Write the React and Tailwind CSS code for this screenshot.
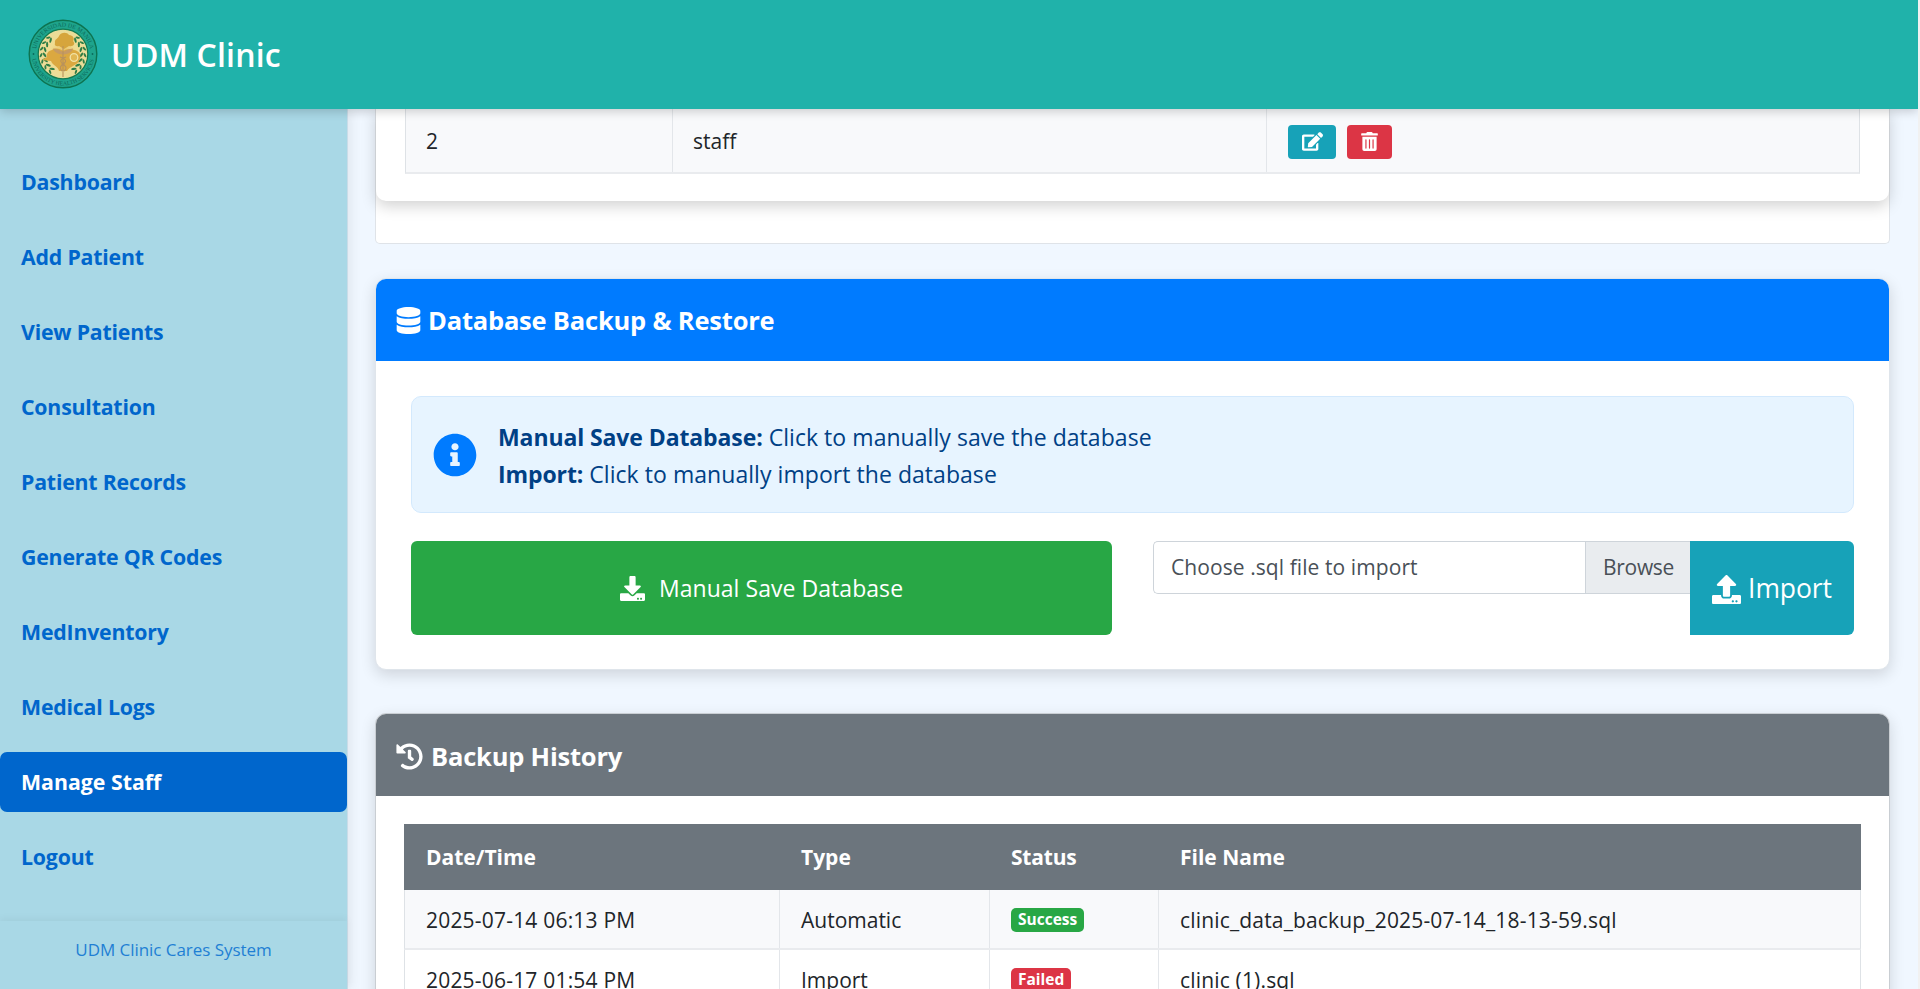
import { FaDatabase, FaEdit, FaTrashAlt, FaInfoCircle, FaDownload, FaHistory } from "react-icons/fa";

const NAV = [
  "Dashboard",
  "Add Patient",
  "View Patients",
  "Consultation",
  "Patient Records",
  "Generate QR Codes",
  "MedInventory",
  "Medical Logs",
  "Manage Staff",
  "Logout",
];

const HISTORY = [
  { date: "2025-07-14 06:13 PM", type: "Automatic", ok: true, file: "clinic_data_backup_2025-07-14_18-13-59.sql" },
  { date: "2025-06-17 01:54 PM", type: "Import", ok: false, file: "clinic (1).sql" },
];

const LEAVES = [0, 1, 2, 3, 4, 5, 6];

function Seal() {
  return (
    <svg viewBox="0 0 70 70" className="mb-[2px] size-[70px] shrink-0">
      <defs>
        <radialGradient id="gold">
          <stop offset="0" stopColor="#e6bb62" />
          <stop offset="0.55" stopColor="#f0dc92" />
          <stop offset="1" stopColor="#e9dc9a" />
        </radialGradient>
        <path id="arcTop" d="M7.6 35a27.4 27.4 0 0 1 54.800 0" />
        <path id="arcBottom" d="M3.600 35a31.400 31.400 0 0 0 62.800 0" />
      </defs>
      <circle cx="35" cy="35" r="33.8" fill="#1ea48c" stroke="#0d7350" strokeWidth="1.400" />
      <circle cx="35" cy="35" r="24.800" fill="url(#gold)" stroke="#137a50" strokeWidth="1.200" />
      <g fill="#0c6a5b" fontFamily="Liberation Serif, serif" fontSize="6">
        <text textLength="76" lengthAdjust="spacingAndGlyphs"><textPath href="#arcTop" startOffset="5">UNIVERSIDAD DE MANILA</textPath></text>
        <text textLength="88" lengthAdjust="spacingAndGlyphs"><textPath href="#arcBottom" startOffset="5">UNIVERSITY HEALTH SERVICES</textPath></text>
      </g>
      <circle cx="5.500" cy="35" r="0.9" fill="#0c6a5b" />
      <circle cx="64.500" cy="35" r="0.9" fill="#0c6a5b" />
      <g fill="#2f7d46">
        {LEAVES.map((i) => {
          const right = -48 + i * 17;
          return (
            <g key={i}>
              <ellipse cx="53.500" cy="35" rx="1.1" ry="2.700" transform={`rotate(${right} 35 35) rotate(32 53.5 35)`} />
              <ellipse cx="57" cy="35" rx="1" ry="2.300" transform={`rotate(${right} 35 35) rotate(-32 57 35)`} />
              <ellipse cx="16.500" cy="35" rx="1.1" ry="2.700" transform={`rotate(${-right} 35 35) rotate(-32 16.5 35)`} />
              <ellipse cx="13" cy="35" rx="1" ry="2.300" transform={`rotate(${-right} 35 35) rotate(32 13 35)`} />
            </g>
          );
        })}
      </g>
      <path d="M27 24c-1-4 3-4 4-7 2-4 8-4 10-1 4 0 6 4 4 6 3 3 0 6-4 5l-5 3-5-3c-3 1-5-1-4-3z" fill="#d6a53c" />
      <path d="M24 31c4-3 8-1 11 1 3-2 8-3 11-1 6 1 8 6 5 11-3 5-9 5-12 10h-8c-1-5-6-5-8-10l-9-1 5-3c-1-3 1-6 5-7z" fill="#dba840" />
      <circle cx="46" cy="38.500" r="3.800" fill="#e2b753" stroke="#f1e2a4" strokeWidth="1.300" />
      <path d="M25 29.500c4 .5 7 1.500 10 3.500 3-2 6-3 10-3.500-1 4-5 5.500-10 6-5-.5-9-2-10-6z" fill="#c69a63" />
      <path d="M35 27v31M32 38c6 2 8 5 2 7 5 2 5 5 2 7M38 38c-6 2-7 5-2 7-5 2-4 5-2 7" fill="none" stroke="#b8925c" strokeWidth="1.100" />
    </svg>
  );
}

function UploadIcon() {
  return (
    <svg viewBox="0 0 512 512" fill="currentColor" className="size-[29px] shrink-0">
      <path d="M296 384h-80c-13.300 0-24-10.700-24-24V192h-87.700c-17.800 0-26.700-21.500-14.100-34.100L242.300 5.700c7.500-7.500 19.800-7.500 27.300 0l152.200 152.200c12.600 12.600 3.700 34.100-14.100 34.100H320v168c0 13.300-10.700 24-24 24zm216-8v112c0 13.300-10.700 24-24 24H24c-13.300 0-24-10.700-24-24V376c0-13.300 10.700-24 24-24h136v8c0 30.900 25.100 56 56 56h80c30.900 0 56-25.100 56-56v-8h136c13.300 0 24 10.700 24 24zm-124 88c0-11-9-20-20-20s-20 9-20 20 9 20 20 20 20-9 20-20zm64 0c0-11-9-20-20-20s-20 9-20 20 9 20 20 20 20-9 20-20z" />
    </svg>
  );
}

export default function App() {
  return (
    <div className="flex h-[989px] w-full overflow-hidden bg-[#f1f1f1] font-['Open_Sans','Noto_Sans',sans-serif] text-[#212529]">
      <div className="flex w-[1918px] flex-col overflow-hidden bg-[#f0f7ff]">
        <header className="z-20 flex h-[109px] shrink-0 items-center bg-[#20b2aa] pl-[28px] shadow-[0_2px_10px_rgba(0,0,0,0.2)]">
          <Seal />
          <h1 className="ml-[13px] text-[32px] font-semibold tracking-[0.15px] text-white">UDM Clinic</h1>
        </header>

        <div className="flex min-h-0 flex-1">
          <aside className="z-10 flex w-[348px] shrink-0 flex-col border-r border-[#c9dce8] bg-[#a9d8e6] shadow-[2px_0_12px_rgba(0,0,0,0.08)]">
            <nav className="flex flex-1 flex-col gap-[15px] pt-[43px]">
              {NAV.map((item) => (
                <a
                  key={item}
                  className={
                    item === "Manage Staff"
                      ? "flex h-[60px] items-center rounded-[7px] bg-[#0066cc] pl-[21px] text-[21.300px] font-bold text-white"
                      : "flex h-[60px] items-center pl-[21px] text-[21.300px] font-bold tracking-[-0.2px] text-[#0066cc]"
                  }
                >
                  {item}
                </a>
              ))}
            </nav>
            <footer className="flex h-[68px] items-center justify-center pb-[10px] text-[17px] tracking-[-0.05px] text-[#1f7fd4] shadow-[0_-2px_8px_rgba(0,0,0,0.05)]">
              UDM Clinic Cares System
            </footer>
          </aside>

          <main className="flex min-w-0 flex-1 flex-col overflow-hidden pl-[27px] pr-[28px]">
            <section className="h-[135px] shrink-0 rounded-b-[5px] border border-t-0 border-[#dfe3e8] bg-white">
              <div className="h-[92px] rounded-b-[10px] bg-white px-[29px] shadow-[0_5px_15px_rgba(0,0,0,0.18)]">
                <div className="flex h-[65px] border-x border-b-2 border-x-[#dee2e6] border-b-[#e9ebee] bg-[#f8f9fb] pr-0 text-[21px]">
                  <div className="flex w-[267px] items-center border-r border-[#e3e6ea] pl-[20px] pt-[2px]">2</div>
                  <div className="flex w-[594px] items-center border-r border-[#e3e6ea] pl-[20px] pt-[2px]">staff</div>
                  <div className="flex items-center gap-[11px] pl-[21px] pt-[2px] text-white">
                    <span className="flex h-[34px] w-[48px] items-center justify-center rounded-[4px] bg-[#17a2b8]">
                      <FaEdit className="size-[21px]" />
                    </span>
                    <span className="flex h-[34px] w-[45px] items-center justify-center rounded-[4px] bg-[#dc3545]">
                      <FaTrashAlt className="size-[19px]" />
                    </span>
                  </div>
                </div>
              </div>
            </section>

            <section className="mt-[34px] h-[392px] shrink-0 overflow-hidden rounded-[11px] border border-[#dfe5eb] bg-white shadow-[0_5px_15px_rgba(0,0,0,0.14)]">
              <h2 className="flex h-[82px] items-center gap-[7px] bg-[#007bff] pl-[20px] pt-[1px] text-[25.500px] font-bold tracking-[-0.2px] text-white">
                <FaDatabase className="h-[27px] w-[25px]" />
                Database Backup &amp; Restore
              </h2>
              <div className="px-[35px] pt-[35px]">
                <div className="flex h-[117px] items-center gap-[21px] rounded-[10px] border border-[#d3e9fd] bg-[#e7f4ff] pl-[21px] text-[#004085]">
                  <FaInfoCircle className="size-[44px] text-[#007bff]" />
                  <div className="pt-[3px] text-[23px] leading-[37.500px] tracking-[0.050px]">
                    <p><strong className="tracking-[-0.1px]">Manual Save Database:</strong> Click to manually save the database</p>
                    <p><strong className="tracking-[-0.1px]">Import:</strong> Click to manually import the database</p>
                  </div>
                </div>
                <div className="mt-[28px] flex h-[94px]">
                  <button className="flex w-[701px] items-center justify-center gap-[14px] rounded-[6px] bg-[#28a745] pt-[1px] text-[23px] tracking-[0.050px] text-white">
                    <FaDownload className="size-[25px]" />
                    <span>Manual Save Database</span>
                  </button>
                  <div className="ml-[41px] flex flex-1 text-[21px] text-[#495057]">
                    <div className="flex h-[53px] flex-1 rounded-l-[5px] border border-r-0 border-[#ced4da]">
                      <span className="flex flex-1 items-center pl-[17px] tracking-[0.080px]">Choose .sql file to import</span>
                      <span className="flex w-[105px] items-center border-l border-[#ced4da] bg-[#e9ecef] pl-[17px] tracking-[-0.3px]">Browse</span>
                    </div>
                    <button className="flex w-[164px] items-center justify-center gap-[7px] rounded-r-[6px] bg-[#17a2b8] pt-[2px] text-[26.500px] tracking-[-0.1px] text-white">
                      <UploadIcon />
                      Import
                    </button>
                  </div>
                </div>
              </div>
            </section>

            <section className="mt-[43px] h-[400px] shrink-0 overflow-hidden rounded-[11px] border border-[#c9ced3] bg-white shadow-[0_5px_15px_rgba(0,0,0,0.14)]">
              <h2 className="flex h-[82px] items-center gap-[8px] bg-[#6c757d] pl-[20px] pt-[2px] text-[25.500px] font-bold tracking-[-0.2px] text-white">
                <FaHistory className="size-[27px]" />
                Backup History
              </h2>
              <div className="px-[28px] pt-[28px]">
                <div className="grid h-[66px] grid-cols-[375px_210px_169px_1fr] items-center bg-[#6c757d] pl-px pt-[2px] text-[21px] font-bold text-white">
                  <span className="pl-[21px]">Date/Time</span>
                  <span className="pl-[21px]">Type</span>
                  <span className="pl-[21px] tracking-[-0.2px]">Status</span>
                  <span className="pl-[21px]">File Name</span>
                </div>
                {HISTORY.map((row) => (
                  <div
                    key={row.file}
                    className={
                      row.ok
                        ? "grid h-[60px] grid-cols-[375px_210px_169px_1fr] border-x border-b-2 border-x-[#dee2e6] border-b-[#e9ebee] bg-[#f8f9fb] text-[21px]"
                        : "grid h-[60px] grid-cols-[375px_210px_169px_1fr] border-x border-b-2 border-x-[#dee2e6] border-b-[#e9ebee] text-[21px]"
                    }
                  >
                    <span className="flex items-center border-r border-[#e3e6ea] pl-[21px] pt-[3px] tracking-[0.2px]">{row.date}</span>
                    <span className="flex items-center border-r border-[#e3e6ea] pl-[21px] pt-[3px]">{row.type}</span>
                    <span className="flex items-center border-r border-[#e3e6ea] pl-[21px] pt-[1px]">
                      <b className={row.ok ? "flex h-[24px] items-center rounded-[5px] bg-[#28a745] px-[7px] text-[15.500px] text-white" : "flex h-[24px] items-center rounded-[5px] bg-[#dc3545] px-[7px] text-[15.500px] text-white"}>
                        {row.ok ? "Success" : "Failed"}
                      </b>
                    </span>
                    <span className="flex items-center pl-[21px] pt-[3px] tracking-[0.17px]">{row.file}</span>
                  </div>
                ))}
              </div>
            </section>
          </main>
        </div>
      </div>
    </div>
  );
}
